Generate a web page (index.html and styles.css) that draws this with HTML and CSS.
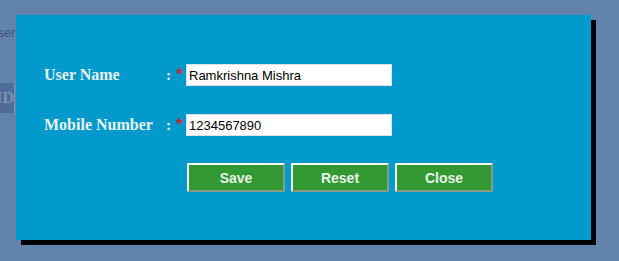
FILE: index.html
```html
<!DOCTYPE html>
<html lang="en">

<head>
  <meta charset="UTF-8">
  <meta name="viewport" content="width=device-width, initial-scale=1.0">
  <title>Edit User</title>
  <link rel="stylesheet" href="styles.css">
</head>

<body>
  <div class="page">
    <div class="page-title">User</div>
    <div class="page-tab">ID</div>
    <div class="page-row">Ramkrishna Mishra <span>1234567890</span></div>
  </div>

  <div class="overlay">
    <div class="popup">
      <div class="form">
        <div class="row">
          <label class="label" for="userName">User Name</label>
          <span class="colon">:</span>
          <span class="req">*</span>
          <input class="field" id="userName" type="text" value="Ramkrishna Mishra">
        </div>
        <div class="row">
          <label class="label" for="mobile">Mobile Number</label>
          <span class="colon">:</span>
          <span class="req">*</span>
          <input class="field" id="mobile" type="text" value="1234567890">
        </div>
        <div class="actions">
          <button class="btn" type="button">Save</button>
          <button class="btn" type="reset">Reset</button>
          <button class="btn" type="button">Close</button>
        </div>
      </div>
    </div>
  </div>
</body>

</html>
```

FILE: styles.css
```css
body {
  margin: 0;
  background-color: #6283ab;
  font-family: "Liberation Sans", Arial, sans-serif;
  overflow: hidden;
}

.page {
  position: relative;
  height: 261px;
  color: #3d5578;
}

.page-title {
  padding: 25px 0 0 0;
  margin-left: -12px;
  font-size: 13px;
}

.page-tab {
  margin-top: 43px;
  width: 36px;
  height: 30px;
  margin-left: -22px;
  background-color: #4f6b97;
  border-right: 1px solid #7d96bb;
  color: #7e93b6;
  font-family: "Liberation Serif", serif;
  font-weight: bold;
  font-size: 16px;
  line-height: 30px;
  text-align: right;
}

.page-row {
  margin-top: 118px;
  padding-left: 20px;
  font-size: 12px;
  color: #4b5f80;
}

.page-row span {
  margin-left: 40px;
}

.overlay {
  position: absolute;
  left: 16px;
  top: 15px;
}

.popup {
  box-sizing: border-box;
  width: 575px;
  height: 225px;
  background-color: #0099cc;
  box-shadow: 5px 5px 0 #000;
  padding: 49px 0 0 28px;
}

.row {
  display: flex;
  align-items: center;
  height: 22px;
  margin-bottom: 28px;
}

.label {
  width: 122px;
  font-family: "Liberation Serif", serif;
  font-weight: bold;
  font-size: 16px;
  color: #e6f3f3;
}

.colon {
  width: 10px;
  font-family: "Liberation Serif", serif;
  font-weight: bold;
  font-size: 15px;
  color: #e6f3f3;
}

.req {
  width: 10px;
  color: #d0243c;
  font-size: 17px;
  font-weight: bold;
  align-self: flex-start;
  margin-top: 1px;
}

.field {
  box-sizing: border-box;
  width: 206px;
  height: 22px;
  margin: 0;
  padding: 1px 2px 0;
  border: 1px solid #d9e4ea;
  background-color: #fff;
  font-family: "Liberation Sans", Arial, sans-serif;
  font-size: 13px;
  color: #000;
  outline: none;
}

.actions {
  display: flex;
  gap: 6px;
  padding-left: 143px;
  margin-top: -1px;
}

.btn {
  box-sizing: border-box;
  width: 98px;
  height: 29px;
  margin: 0;
  padding: 0;
  background-color: #339933;
  border: 2px solid;
  border-color: #f4f8f4 #8a9a8a #8a9a8a #f4f8f4;
  font-family: "Liberation Sans", Arial, sans-serif;
  font-weight: bold;
  font-size: 14px;
  color: #e8f4e8;
  cursor: pointer;
}
```
